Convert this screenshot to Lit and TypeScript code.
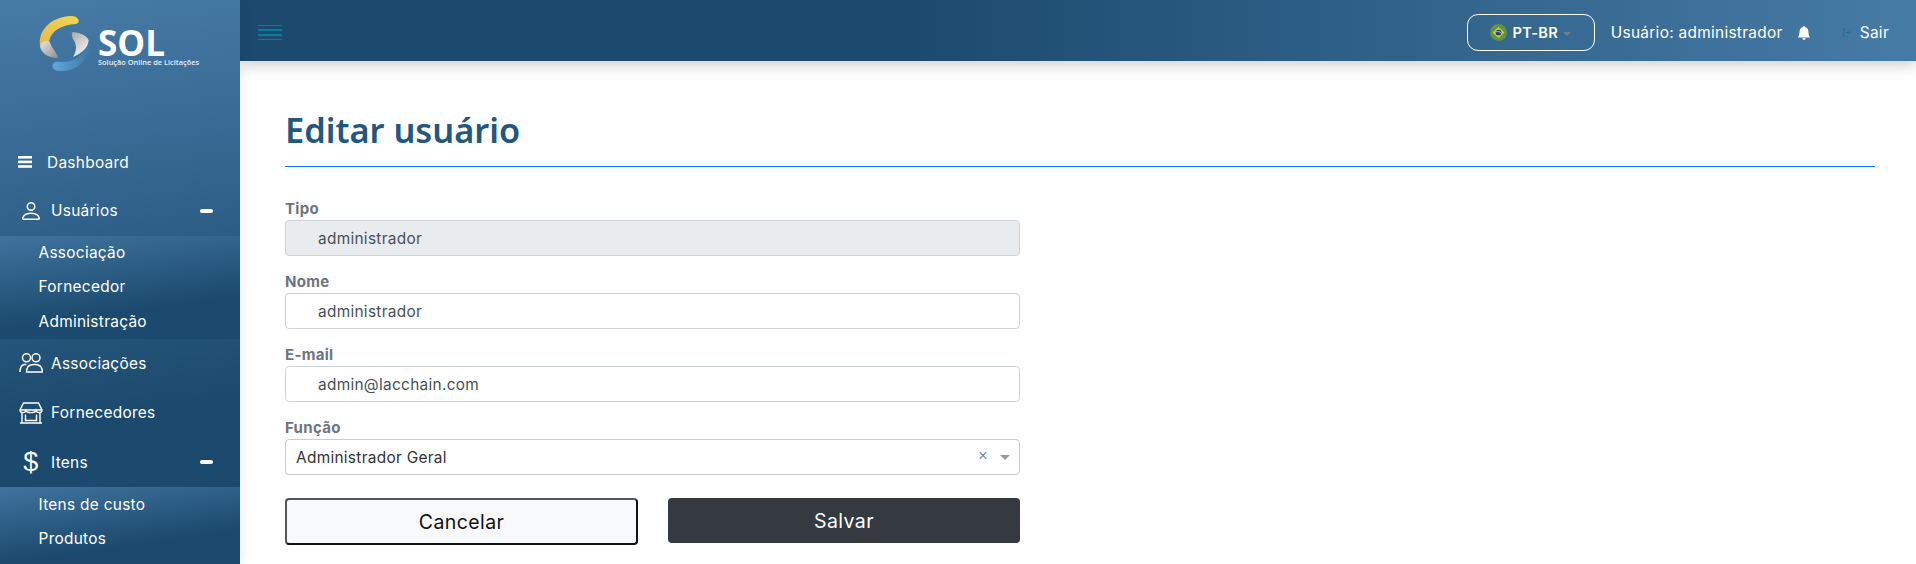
import { LitElement, html, css, svg } from 'lit';
import { customElement } from 'lit/decorators.js';

const ICONS = {
  bars: svg`<svg width="14" height="12" viewBox="0 0 14 12" fill="#fff"><rect y="0" width="14" height="2.6"/><rect y="4.6" width="14" height="2.6"/><rect y="9.2" width="14" height="2.6"/></svg>`,
  person: svg`<svg width="18" height="18" viewBox="2 2 12 12" fill="#fff"><path d="M8 8a3 3 0 1 0 0-6 3 3 0 0 0 0 6Zm2-3a2 2 0 1 1-4 0 2 2 0 0 1 4 0Zm4 8c0 1-1 1-1 1H3s-1 0-1-1 1-4 6-4 6 3 6 4Zm-1-.004c-.001-.246-.154-.986-.832-1.664C11.516 10.68 10.289 10 8 10c-2.29 0-3.516.68-4.168 1.332-.678.678-.83 1.418-.832 1.664h10Z"/></svg>`,
  people: svg`<svg width="24" height="20" viewBox="0 0 24 20" fill="none" stroke="#fff" stroke-width="1.5"><circle cx="7.500" cy="4.800" r="4"/><circle cx="17" cy="4.800" r="4"/><path d="M1 19c0-4 1.600-6.800 4-7.500h2.400M7.500 19c0-4.800 2-7.500 7-7.500h2c5 0 6.800 2.700 6.800 7.500Z"/></svg>`,
  shop: svg`<svg width="24" height="22" viewBox="0 0 24 22" fill="none" stroke="#fff" stroke-width="1.4"><path d="M4.500 1h15L23 8c0 2-2 2.600-3 2.600S17.500 10 17 8.500c-.5 1.500-3 2.100-5 2.100S7.500 10 7 8.500C6.500 10 5 10.600 4 10.600S1 10 1 8Z"/><path d="M1.500 8h21M3 10.600V20.500M21 10.600V20.500M1 21h22M6.500 12.500v6h11v-6"/></svg>`,
};

@customElement('app-root')
export class AppRoot extends LitElement {
  static styles = css`
    :host {
      display: block;
      height: 564px;
      overflow: hidden;
      font-family: Inter, "Noto Sans", sans-serif;
      background: #fff;
    }

    .layout {
      display: flex;
      height: 564px;
    }

    .sidebar {
      width: 240px;
      flex: none;
      height: 564px;
      overflow: hidden;
      background: linear-gradient(172deg, #467ba6 0%, #356791 30%, #1c4a6e 72%, #1c4a6e 100%);
      color: #fff;
      font-size: 15.4px;
      letter-spacing: 0.3px;
      position: relative;
      z-index: 2;
      box-shadow: 2px 0 10px rgba(0, 0, 0, 0.08);
    }

    .logo {
      height: 138px;
      padding: 16px 0 0 39px;
      box-sizing: border-box;
      display: flex;
      align-items: flex-start;
    }

    .logo-text {
      display: flex;
      flex-direction: column;
      margin: 12px 0 0 7px;
      letter-spacing: 0;
    }

    .logo-name {
      font-family: "Open Sans", sans-serif;
      font-weight: 700;
      font-size: 35px;
      line-height: 30px;
    }

    .logo-sub {
      font-family: "Open Sans", sans-serif;
      font-weight: 600;
      font-size: 7.4px;
      line-height: 9px;
      white-space: nowrap;
      color: #e8eef3;
    }

    .item {
      display: grid;
      grid-template-columns: 51px 1fr 40px;
      height: 49.5px;
      align-items: center;
    }

    .item .ico {
      display: flex;
      justify-content: center;
      padding-left: 11px;
      box-sizing: border-box;
      width: 51px;
    }

    .dash {
      height: 48px;
      grid-template-columns: 47px 1fr 40px;
    }

    .dash .ico {
      width: 47px;
      padding-left: 3px;
    }

    .minus {
      width: 13px;
      height: 4px;
      border-radius: 2px;
      background: #fff;
    }

    .dollar {
      font-family: "Liberation Sans", sans-serif;
      font-size: 27px;
      line-height: 1;
    }

    .sub {
      background: linear-gradient(172deg, #3f739e 0%, #1c4a6e 68%, #1c4a6e 100%);
      padding: 0 0 0 38.500px;
      height: 103px;
      display: grid;
      grid-auto-rows: 34.300px;
      align-items: center;
    }

    .sub.open {
      height: 78px;
    }

    .content {
      flex: 1;
      min-width: 0;
      position: relative;
    }

    .topbar {
      height: 61px;
      box-sizing: border-box;
      background: linear-gradient(90deg, #1c4a6e 0%, #1c4a6e 40%, #467ba6 100%);
      box-shadow: 0 4px 14px rgba(0, 0, 0, 0.2);
      display: flex;
      align-items: center;
      color: #fff;
      font-size: 15.4px;
      letter-spacing: 0.3px;
      padding: 4px 0 0 18px;
    }

    .burger {
      width: 24px;
      height: 16px;
      display: flex;
      flex-direction: column;
      justify-content: space-between;
    }

    .burger span {
      height: 1.600px;
      background: #0a7b99;
    }

    .right {
      margin-left: auto;
      display: flex;
      align-items: center;
    }

    .lang {
      width: 128px;
      height: 37px;
      box-sizing: border-box;
      border: 1px solid #fff;
      border-radius: 11px;
      display: flex;
      align-items: center;
      justify-content: center;
      gap: 5px;
      font-weight: 600;
      font-size: 14.6px;
    }

    .caret {
      width: 0;
      height: 0;
      margin: 2px 0 0 0;
      border: 4px solid transparent;
      border-top: 4px solid #6b7f8e;
      border-bottom: 0;
    }

    .user {
      margin-left: 16px;
      width: 171px;
      white-space: nowrap;
    }

    .bell {
      margin-left: 15px;
      display: flex;
    }

    .exit {
      margin-left: 32px;
      display: flex;
      align-items: center;
      gap: 9px;
      margin-right: 27px;
    }

    .page {
      padding: 44px 41px 0 45px;
    }

    h1 {
      margin: 0;
      font-family: "Noto Sans", sans-serif;
      font-weight: 600;
      font-size: 34.4px;
      line-height: 50px;
      color: #22577f;
      padding-bottom: 11px;
      border-bottom: 1px solid #0d6efd;
    }

    form {
      width: 735px;
      margin-top: 31px;
    }

    label {
      display: block;
      font-weight: 700;
      font-size: 15px;
      letter-spacing: 0.3px;
      line-height: 22px;
      color: #6c757d;
    }

    .field {
      height: 36px;
      box-sizing: border-box;
      border: 1px solid #ced4da;
      border-radius: 4px;
      padding-left: 32px;
      display: flex;
      align-items: center;
      font-size: 15.4px;
      letter-spacing: 0.3px;
      color: #495057;
      margin-bottom: 15px;
    }

    .field.off {
      background: #e9ecef;
    }

    .select {
      border-color: #ccc;
      padding: 0 9px 0 10px;
      color: #333;
      margin-bottom: 23px;
    }

    .select .name {
      flex: 1;
    }

    .clear {
      font-family: "Liberation Sans", sans-serif;
      font-size: 16px;
      color: #888;
      margin: -3px 12px 0 0;
    }

    .arrow {
      width: 0;
      height: 0;
      border: 5px solid transparent;
      border-top: 5px solid #999;
      border-bottom: 0;
    }

    .actions {
      display: grid;
      grid-template-columns: 353px 352px;
      justify-content: space-between;
    }

    button {
      height: 47px;
      font-family: inherit;
      font-size: 19.5px;
      letter-spacing: 0.4px;
      border-radius: 4px;
      padding: 0;
    }

    .cancel {
      background: #f8f9fa;
      color: #111;
      border: 2px solid #111;
      border-top-color: #555;
      border-left-color: #555;
    }

    .save {
      height: 45px;
      background: #343a40;
      color: #fff;
      border: 0;
    }
  `;

  render() {
    return html`
      <div class="layout">
        <aside class="sidebar">
          <div class="logo">
            <svg width="52" height="56" viewBox="0 0 52 56">
              <defs>
                <linearGradient id="gold" x1="0" y1="1" x2="1" y2="0">
                  <stop offset="0" stop-color="#e3bb4c"/><stop offset="1" stop-color="#efd656"/>
                </linearGradient>
                <linearGradient id="gl" x1="0" y1="0" x2="1" y2="1">
                  <stop offset="0" stop-color="#e6e6e6"/><stop offset="1" stop-color="#8f8f8f"/>
                </linearGradient>
                <linearGradient id="gr" x1="0" y1="0" x2="0.6" y2="1">
                  <stop offset="0" stop-color="#a8a8a8"/><stop offset="1" stop-color="#f4f4f4"/>
                </linearGradient>
                <linearGradient id="gb" x1="0" y1="0" x2="1" y2="0">
                  <stop offset="0" stop-color="#62a8dd"/><stop offset="1" stop-color="#3d78a8"/>
                </linearGradient>
              </defs>
              <path d="M1 30C-1 14 12 1 32 0c8-.3 10 7 5 8-14 1-25 6-27 18-3-1-7 0-9 4Z" fill="url(#gold)"/>
              <path d="M1 30c2-5 7-6 10-4 1 6 7 10 8 16C9 42 2 37 1 30Z" fill="url(#gl)"/>
              <path d="M34 16c9 1 16 5 16 10-2 7-9 12-16 15 4-7 4-12 0-18-1-3-2-6 0-7Z" fill="url(#gr)"/>
              <path d="M50 24c3 16-9 30-26 31-8 .5-12-2-10-7 2-3 5-2 9-2 14 0 24-8 27-22Z" fill="url(#gb)"/>
            </svg>
            <div class="logo-text">
              <span class="logo-name">SOL</span>
              <span class="logo-sub">Solução Online de Licitações</span>
            </div>
          </div>
          <div class="item dash"><span class="ico">${ICONS.bars}</span><span>Dashboard</span></div>
          <div class="item"><span class="ico">${ICONS.person}</span><span>Usuários</span><span class="minus"></span></div>
          <div class="sub"><span>Associação</span><span>Fornecedor</span><span>Administração</span></div>
          <div class="item"><span class="ico">${ICONS.people}</span><span>Associações</span></div>
          <div class="item"><span class="ico">${ICONS.shop}</span><span>Fornecedores</span></div>
          <div class="item"><span class="ico"><span class="dollar">$</span></span><span>Itens</span><span class="minus"></span></div>
          <div class="sub open"><span>Itens de custo</span><span>Produtos</span></div>
        </aside>
        <div class="content">
          <header class="topbar">
            <div class="burger"><span></span><span></span><span></span><span></span></div>
            <div class="right">
              <div class="lang">
                <svg width="17" height="17" viewBox="0 0 16 16">
                  <circle cx="8" cy="8" r="8" fill="#5f9440"/>
                  <path d="M8 2.800 13.600 8 8 13.200 2.400 8Z" fill="#d9c83a"/>
                  <circle cx="8" cy="8" r="2.700" fill="#1d3f7a"/>
                  <path d="M5.500 7.400c2-.6 3.800-.2 5 1" stroke="#e8e8e8" stroke-width=".7" fill="none"/>
                </svg>
                <span>PT-BR</span><span class="caret"></span>
              </div>
              <span class="user">Usuário: administrador</span>
              <span class="bell">
                <svg width="14" height="16" viewBox="0 0 16 16" fill="#fff"><path d="M8 16a2 2 0 0 0 2-2H6a2 2 0 0 0 2 2zm.995-14.901a1 1 0 1 0-1.990 0A5.002 5.002 0 0 0 3 6c0 1.098-.5 6-2 7h14c-1.500-1-2-5.902-2-7 0-2.420-1.720-4.440-4.005-4.901z"/></svg>
              </span>
              <span class="exit">
                <svg width="8" height="9" viewBox="0 0 9 9" fill="none" stroke="#23708c" stroke-width="1"><path d="M3 .5H.5v8H3M3 4.500h5.500M6.500 2.500l2 2-2 2"/></svg>
                <span>Sair</span>
              </span>
            </div>
          </header>
          <main class="page">
            <h1>Editar usuário</h1>
            <form>
              <label>Tipo</label>
              <div class="field off">administrador</div>
              <label>Nome</label>
              <div class="field">administrador</div>
              <label>E-mail</label>
              <div class="field">admin@lacchain.com</div>
              <label>Função</label>
              <div class="field select">
                <span class="name">Administrador Geral</span>
                <span class="clear">×</span>
                <span class="arrow"></span>
              </div>
              <div class="actions">
                <button class="cancel" type="button">Cancelar</button>
                <button class="save" type="button">Salvar</button>
              </div>
            </form>
          </main>
        </div>
      </div>
    `;
  }
}
